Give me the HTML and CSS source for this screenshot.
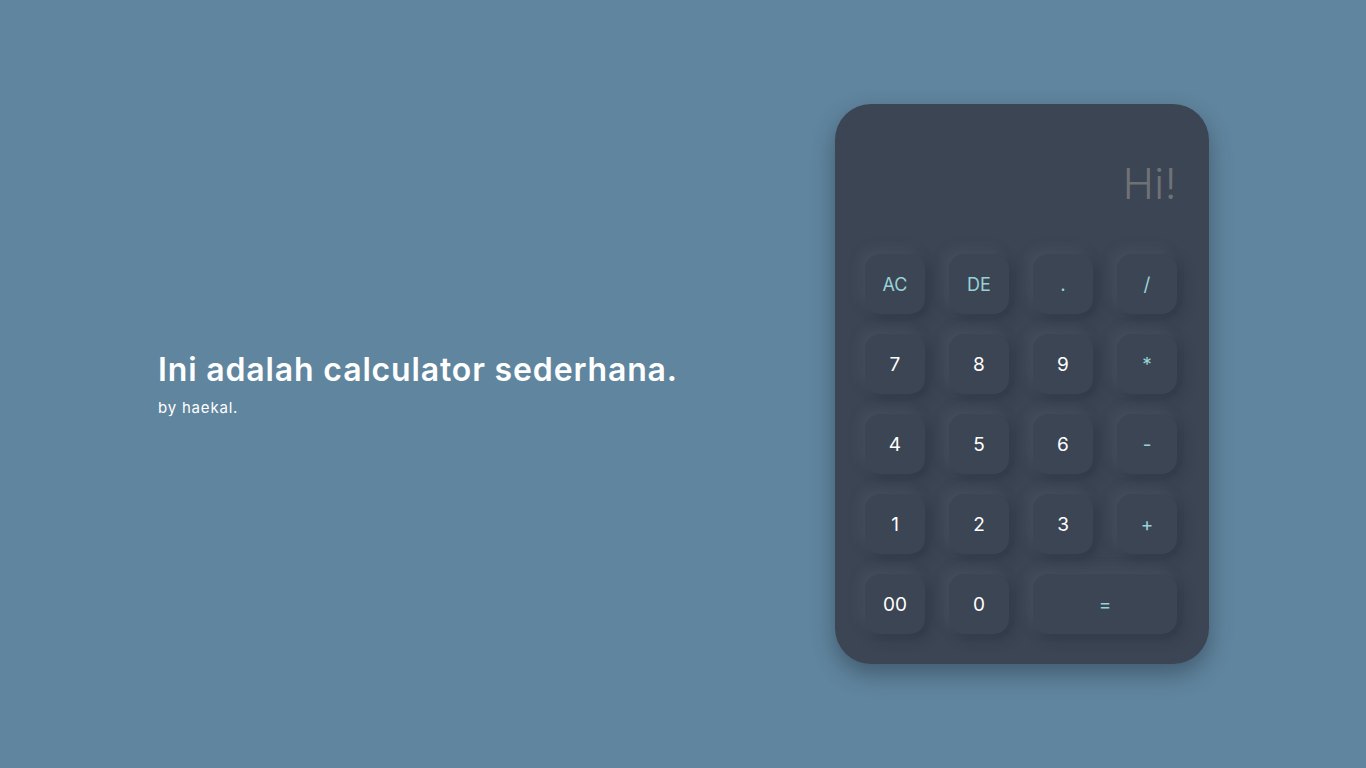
FILE: index.html
```html
<!DOCTYPE html>
<html lang="id">
<head>
<meta charset="utf-8">
<title>Calculator</title>
<link rel="stylesheet" href="styles.css">
</head>
<body>
<main class="page">
  <section class="intro">
    <h1 class="title">Ini adalah calculator sederhana.</h1>
    <p class="byline">by haekal.</p>
  </section>
  <section class="calc">
    <div class="display">Hi!</div>
    <div class="keys">
      <button class="key op small">AC</button>
      <button class="key op small">DE</button>
      <button class="key op">.</button>
      <button class="key op">/</button>
      <button class="key">7</button>
      <button class="key">8</button>
      <button class="key">9</button>
      <button class="key op">*</button>
      <button class="key">4</button>
      <button class="key">5</button>
      <button class="key">6</button>
      <button class="key op">-</button>
      <button class="key">1</button>
      <button class="key">2</button>
      <button class="key">3</button>
      <button class="key op">+</button>
      <button class="key">00</button>
      <button class="key">0</button>
      <button class="key op wide">=</button>
    </div>
  </section>
</main>
</body>
</html>
```
FILE: styles.css
```css
* { box-sizing: border-box; }
html, body { margin: 0; padding: 0; }
body {
  background: #60859e;
  font-family: "Inter", "Open Sans", sans-serif;
  color: #fff;
  height: 768px;
  overflow: hidden;
}
.page {
  height: 768px;
  display: flex;
  align-items: center;
  justify-content: space-between;
  padding: 0 157px 0 158px;
}
.intro { margin-top: 0; }
.title {
  margin: 0;
  font-size: 32px;
  font-weight: 600;
  letter-spacing: 0.85px;
  line-height: 40px;
}
.byline {
  margin: 8px 0 0;
  font-size: 15px;
  font-weight: 400;
  letter-spacing: 0.8px;
  line-height: 20px;
}
.calc {
  width: 374px;
  height: 560px;
  background: #3b4554;
  border-radius: 36px;
  box-shadow: 0 10px 22px rgba(30, 45, 60, 0.45);
  padding: 54px 32px 30px 30px;
  display: flex;
  flex-direction: column;
}
.display {
  height: 96px;
  text-align: right;
  font-size: 42px;
  line-height: 52px;
  font-weight: 300;
  letter-spacing: 0.5px;
  color: #6f7275;
}
.keys {
  display: grid;
  grid-template-columns: repeat(4, 60px);
  grid-auto-rows: 60px;
  column-gap: 24px;
  row-gap: 20px;
}
.key {
  border: none;
  background: #3b4554;
  border-radius: 15px;
  font-family: inherit;
  font-size: 19px;
  color: #ffffff;
  padding: 0;
  box-shadow: -5px -5px 12px rgba(92, 102, 114, 0.3), 5px 5px 12px rgba(40, 48, 60, 0.5);
}
.key.op { color: #97d3d6; }
.key.small { font-size: 18px; }
.key.wide { grid-column: span 2; }
```
